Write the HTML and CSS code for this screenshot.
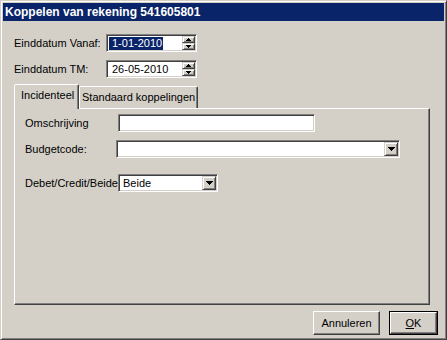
FILE: index.html
```html
<!DOCTYPE html>
<html>
<head>
<meta charset="utf-8">
<link rel="stylesheet" href="styles.css">
</head>
<body>
<div class="window">
  <div class="titlebar">Koppelen van rekening 541605801</div>
  <div class="content">
    <div class="date-row">
      <span class="date-label">Einddatum Vanaf:</span>
      <div class="sunken spin">
        <div class="value"><span class="sel">1-01-2010</span></div>
        <div class="spin-btns">
          <div class="raised spin-btn"><svg width="5" height="3" shape-rendering="crispEdges"><rect x="2" y="0" width="1" height="1"/><rect x="1" y="1" width="3" height="1"/><rect x="0" y="2" width="5" height="1"/></svg></div>
          <div class="raised spin-btn"><svg width="5" height="3" shape-rendering="crispEdges"><rect x="0" y="0" width="5" height="1"/><rect x="1" y="1" width="3" height="1"/><rect x="2" y="2" width="1" height="1"/></svg></div>
        </div>
      </div>
    </div>
    <div class="date-row">
      <span class="date-label">Einddatum TM:</span>
      <div class="sunken spin">
        <div class="value">26-05-2010</div>
        <div class="spin-btns">
          <div class="raised spin-btn"><svg width="5" height="3" shape-rendering="crispEdges"><rect x="2" y="0" width="1" height="1"/><rect x="1" y="1" width="3" height="1"/><rect x="0" y="2" width="5" height="1"/></svg></div>
          <div class="raised spin-btn"><svg width="5" height="3" shape-rendering="crispEdges"><rect x="0" y="0" width="5" height="1"/><rect x="1" y="1" width="3" height="1"/><rect x="2" y="2" width="1" height="1"/></svg></div>
        </div>
      </div>
    </div>

    <div class="tabs">
      <div class="tab active">Incidenteel</div>
      <div class="tab">Standaard koppelingen</div>
    </div>
    <div class="panel">
      <div class="prow prow-1">
        <span class="plabel w93">Omschrijving</span>
        <div class="sunken textbox tb-omschr"></div>
      </div>
      <div class="prow prow-2">
        <span class="plabel w91">Budgetcode:</span>
        <div class="sunken combo combo-budget">
          <div class="combo-value"></div>
          <div class="raised combo-btn"><svg width="7" height="4" shape-rendering="crispEdges"><rect x="0" y="0" width="7" height="1"/><rect x="1" y="1" width="5" height="1"/><rect x="2" y="2" width="3" height="1"/><rect x="3" y="3" width="1" height="1"/></svg></div>
        </div>
      </div>
      <div class="prow prow-3">
        <span class="plabel w93">Debet/Credit/Beide</span>
        <div class="sunken combo combo-debet">
          <div class="combo-value">Beide</div>
          <div class="raised combo-btn"><svg width="7" height="4" shape-rendering="crispEdges"><rect x="0" y="0" width="7" height="1"/><rect x="1" y="1" width="5" height="1"/><rect x="2" y="2" width="3" height="1"/><rect x="3" y="3" width="1" height="1"/></svg></div>
        </div>
      </div>
    </div>

    <div class="buttons">
      <div class="button btn-cancel">Annuleren</div>
      <div class="default-ring"><div class="button btn-ok"><span class="ul">O</span>K</div></div>
    </div>
  </div>
</div>
</body>
</html>
```
FILE: styles.css
```css
* { box-sizing: border-box; }
body {
  margin: 0;
  font-family: "Liberation Sans", Arial, sans-serif;
  font-size: 11px;
  color: #000;
  background: #d4d0c8;
}
.window {
  width: 447px;
  height: 340px;
  background: #d4d0c8;
  border: 1px solid;
  border-color: #d4d0c8 #404040 #404040 #d4d0c8;
  box-shadow: inset 1px 1px #fff, inset -1px -1px #808080;
  padding: 2px;
  display: flex;
  flex-direction: column;
}
.titlebar {
  height: 18px;
  background: #0a246a;
  color: #fff;
  font-weight: bold;
  font-size: 12px;
  line-height: 18px;
  padding-left: 2px;
  white-space: nowrap;
}
.content {
  flex: 1;
  display: flex;
  flex-direction: column;
  padding: 13px 6px 0 11px;
}
.sunken {
  border: 1px solid;
  border-color: #808080 #fff #fff #808080;
  box-shadow: inset 1px 1px #404040, inset -1px -1px #d4d0c8;
  padding: 1px;
  background: #fff;
}
.raised {
  background: #d4d0c8;
  border: 1px solid;
  border-color: #d4d0c8 #404040 #404040 #d4d0c8;
  box-shadow: inset 1px 1px #fff, inset -1px -1px #808080;
  display: flex;
  align-items: center;
  justify-content: center;
}
.date-row {
  display: flex;
  align-items: center;
  height: 18px;
}
.date-row + .date-row { margin-top: 8px; }
.date-label { width: 92px; white-space: nowrap; }
.spin {
  width: 91px;
  height: 18px;
  display: flex;
}
.value {
  flex: 1;
  line-height: 14px;
  padding-left: 4px;
  white-space: nowrap;
}
.sel {
  background: #0a246a;
  color: #fff;
  margin-left: -3px;
  padding: 0 1px 0 3px;
  display: inline-block;
  line-height: 13px;
  margin-top: 0;
}
.spin-btns {
  width: 13px;
  display: flex;
  flex-direction: column;
}
.spin-btn { height: 7px; }
.spin-btn svg { display: block; }

.tabs {
  display: flex;
  align-items: flex-end;
  height: 24px;
  margin-top: 6px;
}
.tab {
  height: 22px;
  border: 1px solid;
  border-bottom: none;
  border-color: #fff #404040 transparent #fff;
  box-shadow: inset -1px 0 #808080;
  border-radius: 2px 2px 0 0;
  padding: 3px 0 0 2px;
  line-height: 14px;
  white-space: nowrap;
  width: 119px;
  background: #d4d0c8;
}
.tab.active {
  width: 65px;
  height: 25px;
  margin-bottom: -1px;
  padding-left: 6px;
  position: relative;
  z-index: 1;
}
.panel {
  width: 416px;
  height: 197px;
  border: 1px solid;
  border-color: #fff #404040 #404040 #fff;
  box-shadow: inset -1px -1px #808080;
  padding: 5px 0 0 10px;
  display: flex;
  flex-direction: column;
}
.prow {
  display: flex;
  align-items: center;
  height: 18px;
}
.prow-2 { margin-top: 8px; }
.prow-3 { margin-top: 16px; }
.plabel { white-space: nowrap; }
.w93 { width: 93px; }
.w91 { width: 91px; }
.textbox { height: 18px; }
.tb-omschr { width: 197px; }
.combo {
  height: 18px;
  display: flex;
}
.combo-budget { width: 284px; }
.combo-debet { width: 100px; }
.combo-value {
  flex: 1;
  line-height: 14px;
  padding-left: 3px;
  white-space: nowrap;
}
.combo-btn { width: 14px; }
.combo-btn svg { display: block; }

.buttons {
  display: flex;
  justify-content: flex-end;
  gap: 9px;
  margin-top: 6px;
}
.button {
  height: 24px;
  background: #d4d0c8;
  border: 1px solid;
  border-color: #fff #404040 #404040 #fff;
  box-shadow: inset -1px -1px #808080;
  display: flex;
  align-items: center;
  justify-content: center;
  padding-bottom: 1px;
}
.btn-cancel { width: 67px; }
.default-ring {
  border: 1px solid #000;
  width: 49px;
  height: 24px;
}
.btn-ok {
  width: 47px;
  height: 22px;
}
.ul { text-decoration: underline; }
```
